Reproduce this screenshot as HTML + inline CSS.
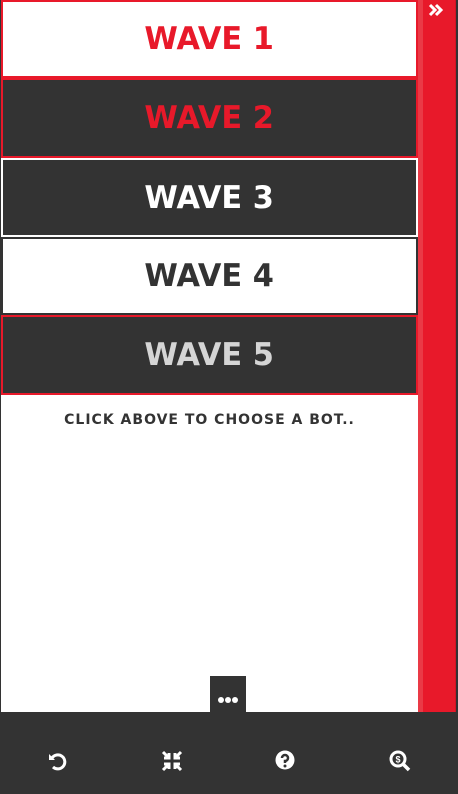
<!DOCTYPE html>
<html><head><style>
*{margin:0;padding:0;box-sizing:border-box}
body{width:458px;height:794px;overflow:hidden;background:#fff;position:relative;font-family:"DejaVu Sans","Liberation Sans",sans-serif}
.l{position:absolute;left:0;top:0;width:1px;height:712px;background:#333}
.btn{position:absolute;left:1px;width:417px;display:flex;align-items:center;justify-content:center;font-weight:bold;font-size:31px;letter-spacing:0px}
.btn span{display:inline-block;transform:scaleX(0.98)}
.side{position:absolute;left:418px;top:0;width:40px;height:712px;background:#e8192a}
.side .a{position:absolute;left:0;top:0;width:5px;height:712px;background:#ea3a46}
.side .b{position:absolute;left:37px;top:0;width:1px;height:712px;background:#d01524}
.side .c{position:absolute;left:38px;top:0;width:2px;height:712px;background:#333}
.bar{position:absolute;left:0;top:712px;width:458px;height:82px;background:#333}
.dots{position:absolute;left:210px;top:676px;width:36px;height:36px;background:#333}
.msg{position:absolute;left:1px;width:417px;top:412px;text-align:center;font-weight:bold;font-size:14px;color:#333;letter-spacing:1px}
</style></head><body>
<div class="l"></div>
<div class="btn" style="top:0;height:78px;background:#fff;border:2px solid #e8192a;color:#e8192a"><span>WAVE 1</span></div>
<div class="btn" style="top:78px;height:80px;background:#333;border:2px solid #e8192a;color:#e8192a"><span>WAVE 2</span></div>
<div class="btn" style="top:158px;height:79px;background:#333;border:2px solid #fff;color:#fff"><span>WAVE 3</span></div>
<div class="btn" style="top:237px;height:78px;background:#fff;border:2px solid #333;color:#333"><span>WAVE 4</span></div>
<div class="btn" style="top:315px;height:80px;background:#333;border:2px solid #e8192a;color:#d5d5d5"><span>WAVE 5</span></div>
<div class="msg">CLICK ABOVE TO CHOOSE A BOT..</div>
<div class="side"><div class="a"></div><div class="b"></div><div class="c"></div>
<svg style="position:absolute;left:10px;top:3px" width="16" height="14" viewBox="0 0 16 14"><path d="M2 2l5 5-5 5M8 2l5 5-5 5" stroke="#fff" stroke-width="3" fill="none"/></svg></div>
<div class="dots"><svg width="36" height="36"><circle cx="11" cy="24" r="3" fill="#fff"/><circle cx="18" cy="24" r="3" fill="#fff"/><circle cx="25" cy="24" r="3" fill="#fff"/></svg></div>
<div class="bar">
<svg style="position:absolute;left:47px;top:38px" width="22" height="22" viewBox="0 0 22 22"><path d="M5 8a7 7 0 1 1 1 9" stroke="#fff" stroke-width="3" fill="none"/><path d="M2 4v6h6z" fill="#fff"/></svg>
<svg style="position:absolute;left:161px;top:38px" width="22" height="22" viewBox="0 0 22 22"><g stroke="#fff" stroke-width="3" fill="none"><path d="M2 2l6 6M8 3v5H3M20 2l-6 6M14 3v5h5M2 20l6-6M8 19v-5H3M20 20l-6-6M14 19v-5h5"/></g></svg>
<svg style="position:absolute;left:275px;top:38px" width="22" height="22" viewBox="0 0 22 22"><circle cx="10" cy="10" r="9.5" fill="#fff"/><path d="M7 8a3 3 0 1 1 3 3v2" stroke="#333" stroke-width="2.5" fill="none"/><circle cx="10" cy="16" r="1.5" fill="#333"/></svg>
<svg style="position:absolute;left:389px;top:38px" width="22" height="22" viewBox="0 0 22 22"><circle cx="9" cy="9" r="7" stroke="#fff" stroke-width="3" fill="none"/><path d="M14 14l6 6" stroke="#fff" stroke-width="3.5"/><text x="9" y="12.5" font-size="9" font-weight="bold" fill="#fff" text-anchor="middle" font-family="Liberation Sans">$</text></svg>
</div>
</body></html>
